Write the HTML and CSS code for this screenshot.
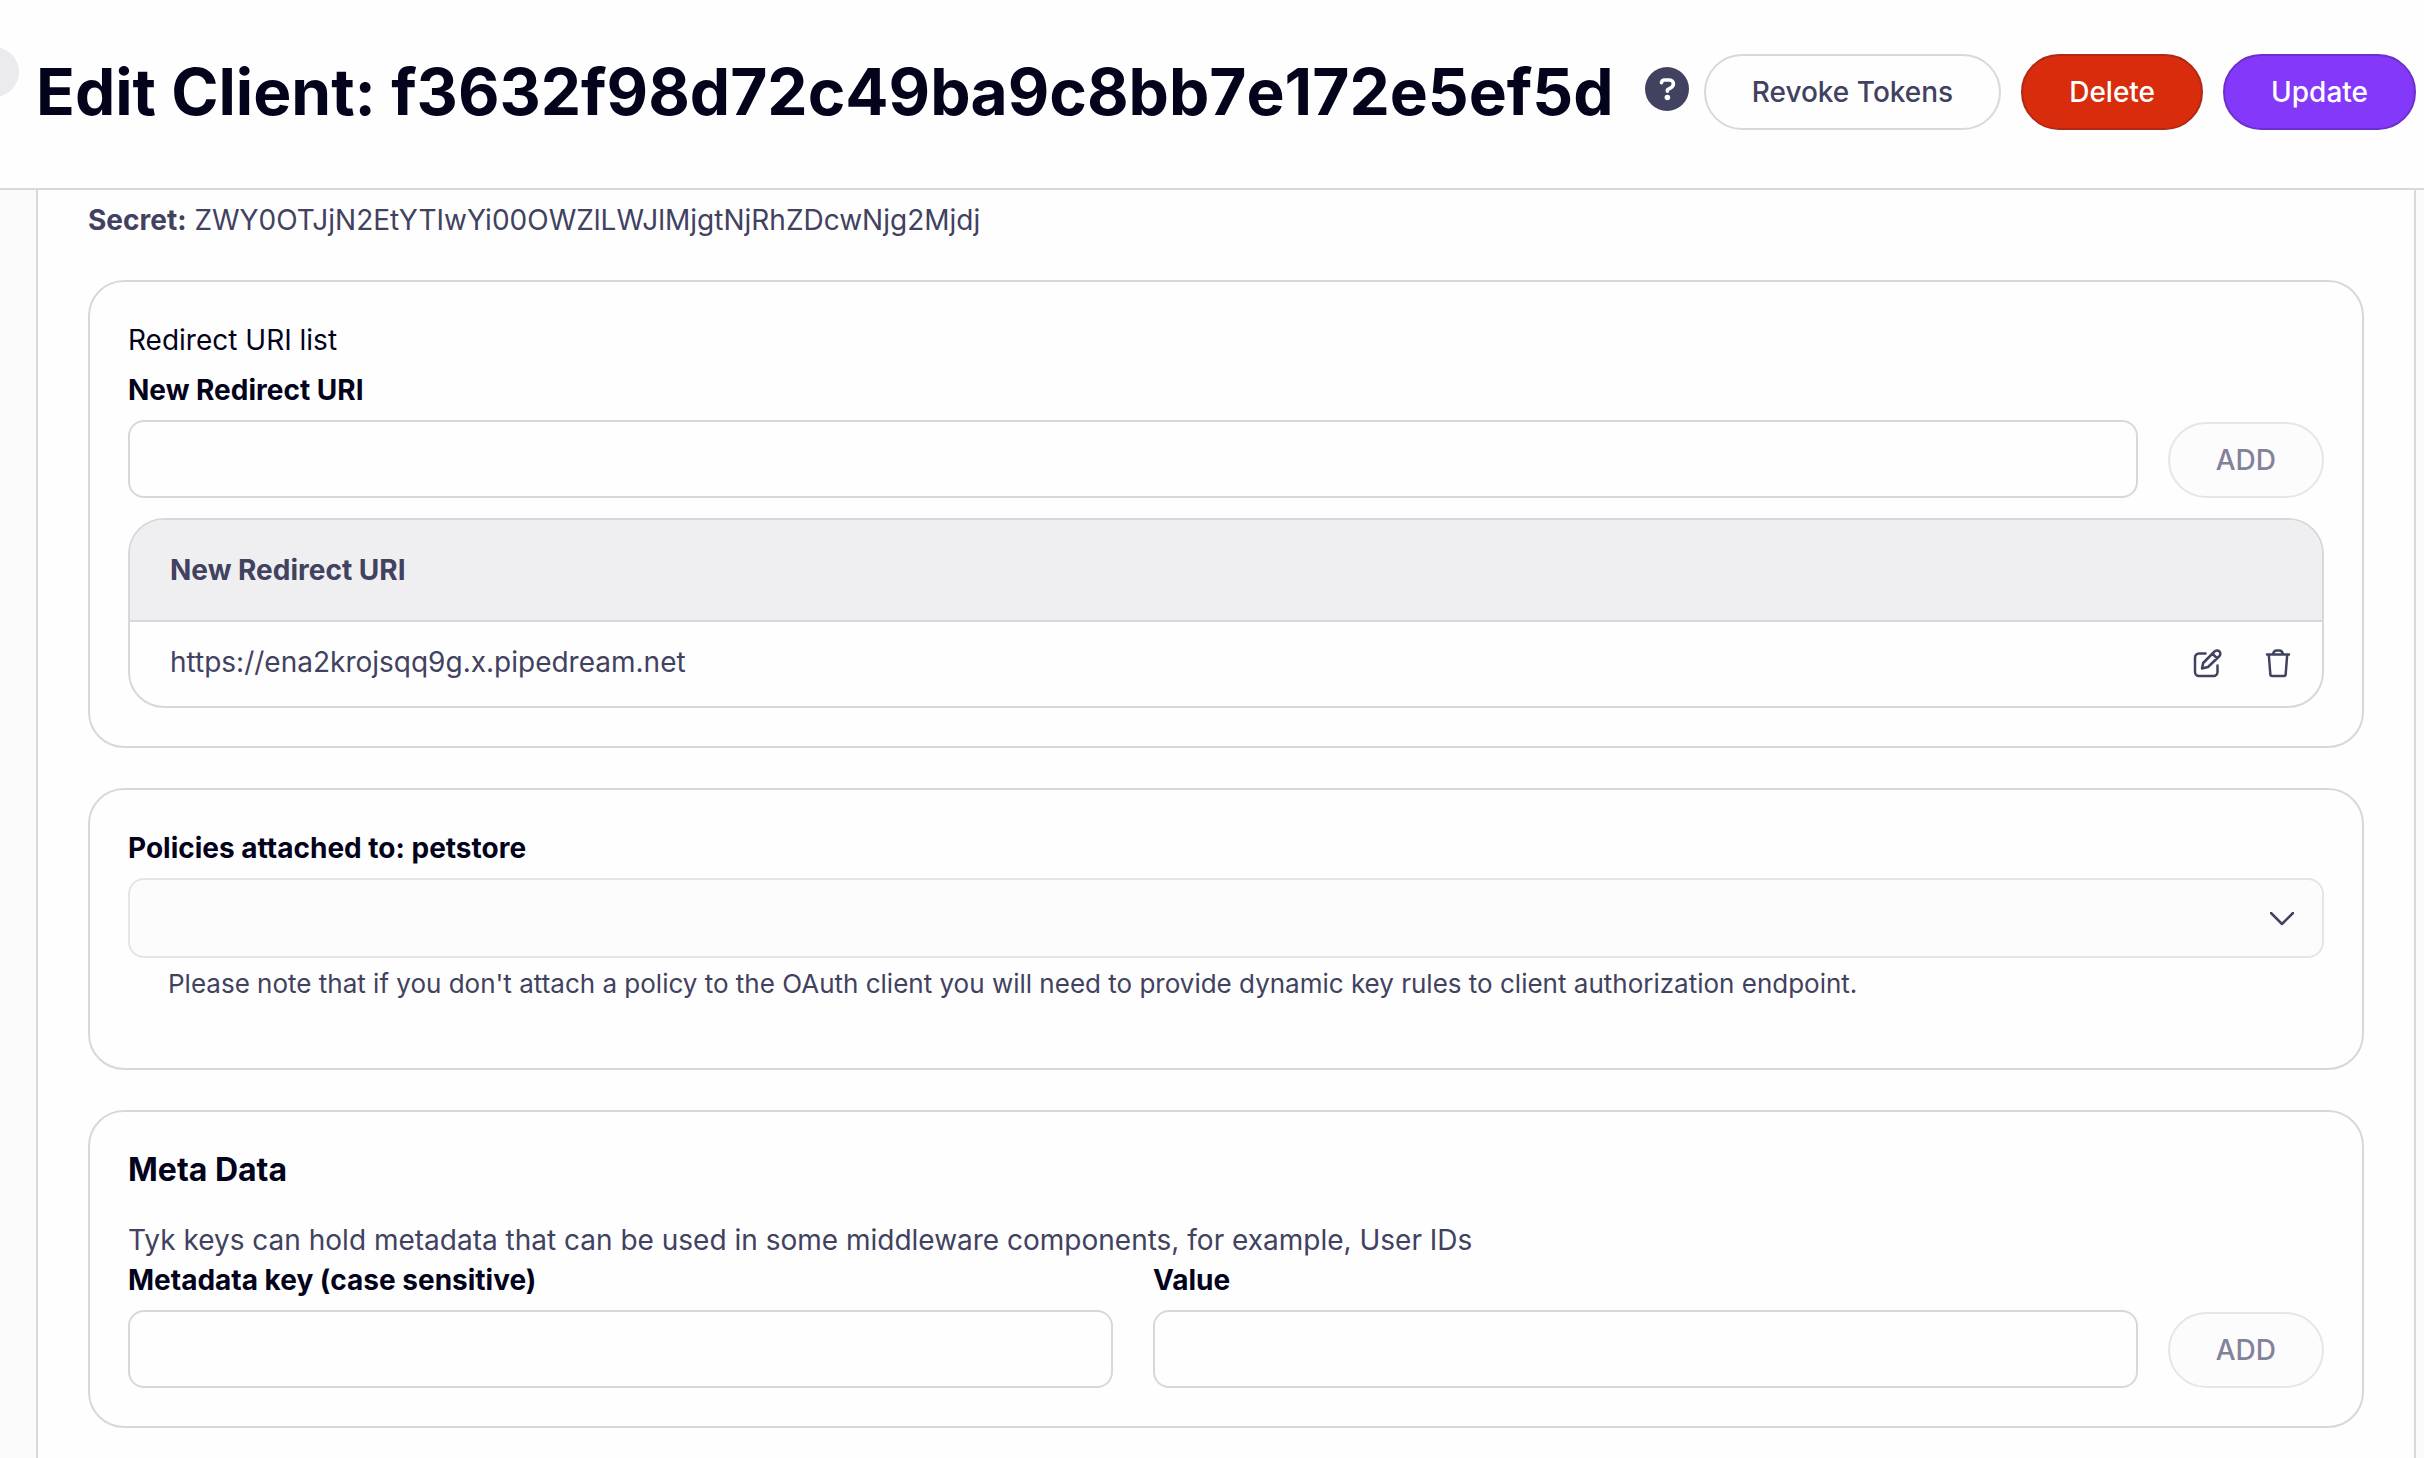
FILE: index.html
```html
<!DOCTYPE html>
<html lang="en">
<head>
<meta charset="utf-8">
<title>Edit Client</title>
<link rel="stylesheet" href="styles.css">
</head>
<body>
<header class="page-header">
  <button type="button" class="sidebar-toggle" aria-label="Toggle sidebar"></button>
  <h1 class="page-title">Edit Client: f3632f98d72c49ba9c8bb7e172e5ef5d</h1>
  <button type="button" class="help" aria-label="Help">
    <svg viewBox="0 0 44 44" width="44" height="44" aria-hidden="true">
      <circle cx="22" cy="22" r="22" fill="#414160"/>
      <path d="M16.500 15.800C16.500 14 17.500 13 19.500 13H24.500C27 13 28.400 14.800 28.400 16.800C28.400 18.800 27.500 19.800 26 20.700L22.400 22.800V24.300" fill="none" stroke="#fff" stroke-width="3.600" stroke-linecap="round" stroke-linejoin="round"/>
      <circle cx="22.400" cy="30.500" r="2.800" fill="#fff"/>
    </svg>
  </button>
  <div class="actions">
    <button type="button" class="btn">Revoke Tokens</button>
    <button type="button" class="btn btn-danger">Delete</button>
    <button type="button" class="btn btn-primary">Update</button>
  </div>
</header>
<main class="panel">
  <p class="secret"><strong>Secret:</strong> ZWY0OTJjN2EtYTIwYi00OWZlLWJlMjgtNjRhZDcwNjg2Mjdj</p>

  <section class="card">
    <p class="list-title">Redirect URI list</p>
    <div class="form-row">
      <div class="field">
        <label for="redirect-uri">New Redirect URI</label>
        <input type="text" id="redirect-uri" class="control">
      </div>
      <button type="button" class="btn" disabled>ADD</button>
    </div>
    <div class="table-wrap">
      <table class="uri-table">
        <thead>
          <tr><th colspan="2" scope="col">New Redirect URI</th></tr>
        </thead>
        <tbody>
          <tr>
            <td>https://ena2krojsqq9g.x.pipedream.net</td>
            <td class="row-actions">
              <div class="icon-group">
                <button type="button" class="icon-btn" aria-label="Edit">
                  <svg viewBox="0 0 32 32" width="32" height="32" aria-hidden="true">
                    <path d="M15.500 6.500H9A4 4 0 0 0 5 10.500V25A4 4 0 0 0 9 29H23.500A4 4 0 0 0 27.500 25V18.500"/>
                    <path d="M12 21.500L13.200 16L24.500 4.500A3.200 3.200 0 0 1 29.500 9L18 20ZM22.300 6.800L27.200 11.200"/>
                  </svg>
                </button>
                <button type="button" class="icon-btn" aria-label="Delete">
                  <svg viewBox="0 0 32 32" width="32" height="32" aria-hidden="true">
                    <path d="M5 7.500H27M6.800 7.500L8.300 27A2 2 0 0 0 10.300 29H21.700A2 2 0 0 0 23.700 27L25.200 7.500M11 7.500C11.500 4.500 12.500 3.500 14.500 3.500H17.500C19.500 3.500 20.500 4.500 21 7.500"/>
                  </svg>
                </button>
              </div>
            </td>
          </tr>
        </tbody>
      </table>
    </div>
  </section>

  <section class="card">
    <div class="field">
      <label for="policies">Policies attached to: petstore</label>
      <div class="select-wrap">
        <select id="policies" class="control" disabled></select>
        <svg class="chevron" viewBox="0 0 24 14" width="24" height="14" aria-hidden="true">
          <path d="M1 1L12 12L23 1"/>
        </svg>
      </div>
    </div>
    <p class="note">Please note that if you don't attach a policy to the OAuth client you will need to provide dynamic key rules to client authorization endpoint.</p>
  </section>

  <section class="card">
    <h2 class="card-title">Meta Data</h2>
    <p class="description">Tyk keys can hold metadata that can be used in some middleware components, for example, User IDs</p>
    <div class="form-row">
      <div class="field-pair">
        <div class="field">
          <label for="meta-key">Metadata key (case sensitive)</label>
          <input type="text" id="meta-key" class="control">
        </div>
        <div class="field">
          <label for="meta-value">Value</label>
          <input type="text" id="meta-value" class="control">
        </div>
      </div>
      <button type="button" class="btn" disabled>ADD</button>
    </div>
  </section>
</main>
</body>
</html>
```

FILE: styles.css
```css
* {
  box-sizing: border-box;
}

body {
  display: flex;
  flex-direction: column;
  min-height: 100vh;
  margin: 0;
  background: #fbfbfb;
  color: #414160;
  font: 400 28px/40px Inter, "Liberation Sans", sans-serif;
}

h1,
h2,
p {
  margin: 0;
}

strong {
  font-weight: 700;
}

button,
input,
select {
  font: inherit;
  color: inherit;
}

.page-header {
  position: relative;
  display: flex;
  align-items: center;
  padding: 54px 8px 58px 36px;
  border-bottom: 2px solid #d8d8df;
  background: #fefefe;
  overflow: hidden;
}

.sidebar-toggle {
  position: absolute;
  top: 47px;
  left: -31px;
  width: 50px;
  height: 50px;
  padding: 0;
  border: 0;
  border-radius: 50%;
  background: #ebebef;
}

.page-title {
  color: #03031c;
  font-size: 64px;
  font-weight: 700;
  font-kerning: none;
  line-height: 76px;
  white-space: nowrap;
}

.help {
  flex: none;
  width: 44px;
  height: 44px;
  margin: 0 15px 6px auto;
  padding: 0;
  border: 0;
  background: none;
}

.help svg,
.icon-btn svg {
  display: block;
}

.actions {
  display: flex;
  gap: 20px;
}

.btn {
  height: 76px;
  padding: 0 46px;
  border: 2px solid #d8d8df;
  border-radius: 38px;
  background: #fefefe;
  font-weight: 500;
  white-space: nowrap;
}

.btn-danger {
  border-color: #b02915;
  background: #d82c0d;
  color: #fff;
}

.btn-primary {
  border-color: #6d2fcb;
  background: #8438fa;
  color: #fff;
}

.btn:disabled {
  border-color: #e6e6ea;
  background: #fcfcfc;
  color: #82829a;
}

.panel {
  display: flex;
  flex: 1;
  flex-direction: column;
  gap: 40px;
  margin: 0 8px 0 36px;
  padding: 10px 50px 30px;
  border: solid #d8d8df;
  border-width: 0 2px;
  background: #fefefe;
}

.card {
  padding: 38px;
  border: 2px solid #d8d8dc;
  border-radius: 36px;
}

.list-title {
  margin-bottom: 10px;
  color: #03031c;
}

.form-row {
  display: flex;
  align-items: flex-end;
  gap: 30px;
}

.field {
  display: flex;
  flex: 1;
  flex-direction: column;
  gap: 10px;
  min-width: 0;
}

.field label {
  color: #03031c;
  font-weight: 700;
}

.field-pair {
  display: flex;
  flex: 1;
  gap: 40px;
}

.control {
  display: block;
  width: 100%;
  height: 78px;
  padding: 0 20px;
  border: 2px solid #d8d8dc;
  border-radius: 16px;
  background: #fefefe;
}

select.control {
  height: 80px;
  border-color: #e5e5e9;
  background: #fcfcfc;
  appearance: none;
  opacity: 1;
}

.select-wrap {
  position: relative;
}

.chevron {
  position: absolute;
  top: 34px;
  right: 30px;
  fill: none;
  stroke: #414160;
  stroke-width: 2.5;
  stroke-linecap: round;
  stroke-linejoin: round;
}

.table-wrap {
  margin-top: 20px;
  border: 2px solid #d8d8dc;
  border-radius: 36px;
  overflow: hidden;
}

.uri-table {
  width: 100%;
  border-collapse: separate;
  border-spacing: 0;
}

.uri-table th {
  padding: 30px 40px;
  border-bottom: 2px solid #d8d8dc;
  background: #efeff2;
  font-weight: 700;
  text-align: left;
}

.uri-table td {
  padding: 20px 40px 24px;
}

.uri-table .row-actions {
  padding: 22px 28px 24px 0;
}

.icon-group {
  display: flex;
  justify-content: flex-end;
  gap: 40px;
}

.icon-btn {
  padding: 0;
  border: 0;
  background: none;
}

.icon-btn svg {
  fill: none;
  stroke: #414160;
  stroke-width: 2.5;
  stroke-linecap: round;
  stroke-linejoin: round;
}

.note {
  margin: 10px 40px 30px;
  font-size: 26px;
  line-height: 32px;
}

.card-title {
  margin-bottom: 30px;
  color: #03031c;
  font-size: 32px;
  font-weight: 700;
  line-height: 40px;
}
```
